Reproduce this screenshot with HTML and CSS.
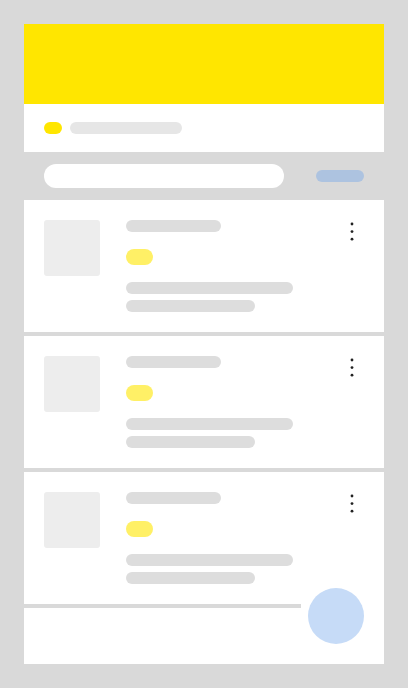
FILE: index.html
```html
<!DOCTYPE html>
<html lang="en">
<head>
<meta charset="utf-8">
<title>List</title>
<link rel="stylesheet" href="styles.css">
</head>
<body>
<div class="app">
  <header class="hero"></header>
  <div class="subbar">
    <span class="dot-pill"></span>
    <span class="sub-pill"></span>
  </div>
  <div class="searchbar">
    <div class="search"></div>
    <div class="action"></div>
  </div>
  <div class="list">
    <div class="card">
      <div class="thumb"></div>
      <div class="body">
        <div class="title"></div>
        <div class="tag"></div>
        <div class="line line-long"></div>
        <div class="line line-short"></div>
      </div>
      <svg class="kebab" viewBox="0 0 24 24" width="24" height="24"><circle cx="12" cy="4" r="1.4"/><circle cx="12" cy="11.6" r="1.4"/><circle cx="12" cy="19.2" r="1.4"/></svg>
    </div>
    <div class="card">
      <div class="thumb"></div>
      <div class="body">
        <div class="title"></div>
        <div class="tag"></div>
        <div class="line line-long"></div>
        <div class="line line-short"></div>
      </div>
      <svg class="kebab" viewBox="0 0 24 24" width="24" height="24"><circle cx="12" cy="4" r="1.4"/><circle cx="12" cy="11.6" r="1.4"/><circle cx="12" cy="19.2" r="1.4"/></svg>
    </div>
    <div class="card">
      <div class="thumb"></div>
      <div class="body">
        <div class="title"></div>
        <div class="tag"></div>
        <div class="line line-long"></div>
        <div class="line line-short"></div>
      </div>
      <svg class="kebab" viewBox="0 0 24 24" width="24" height="24"><circle cx="12" cy="4" r="1.4"/><circle cx="12" cy="11.6" r="1.4"/><circle cx="12" cy="19.2" r="1.4"/></svg>
    </div>
  </div>
  <div class="footer">
    <div class="strip"></div>
  </div>
  <div class="fab"></div>
</div>
</body>
</html>
```
FILE: styles.css
```css
html, body {
  margin: 0;
  padding: 0;
}
body {
  background: #d9d9d9;
  padding: 24px;
  font-family: "Liberation Sans", Arial, sans-serif;
}
.app {
  position: relative;
  width: 360px;
  height: 640px;
  display: flex;
  flex-direction: column;
}
.hero {
  height: 80px;
  background: #ffe600;
  flex: none;
}
.subbar {
  height: 48px;
  background: #ffffff;
  display: flex;
  align-items: center;
  padding: 0 20px;
  gap: 8px;
  flex: none;
}
.dot-pill {
  width: 18px;
  height: 12px;
  border-radius: 6px;
  background: #ffe600;
}
.sub-pill {
  width: 112px;
  height: 12px;
  border-radius: 6px;
  background: #e6e6e6;
}
.searchbar {
  height: 48px;
  display: flex;
  align-items: center;
  justify-content: space-between;
  padding: 0 20px;
  flex: none;
}
.search {
  width: 240px;
  height: 24px;
  border-radius: 12px;
  background: #ffffff;
}
.action {
  width: 48px;
  height: 12px;
  border-radius: 6px;
  background: #adc3e0;
}
.list {
  display: flex;
  flex-direction: column;
  gap: 4px;
  flex: none;
}
.card {
  height: 132px;
  box-sizing: border-box;
  background: #ffffff;
  padding: 20px;
  display: flex;
  align-items: flex-start;
}
.thumb {
  width: 56px;
  height: 56px;
  border-radius: 3px;
  background: #ededed;
  flex: none;
}
.body {
  margin-left: 26px;
  flex: 1;
  display: flex;
  flex-direction: column;
  align-items: flex-start;
}
.title {
  width: 95px;
  height: 12px;
  border-radius: 6px;
  background: #dddddd;
}
.tag {
  margin-top: 17px;
  width: 27px;
  height: 16px;
  border-radius: 8px;
  background: #fff066;
}
.line {
  height: 12px;
  border-radius: 6px;
  background: #dddddd;
}
.line-long {
  margin-top: 17px;
  width: 167px;
}
.line-short {
  margin-top: 6px;
  width: 129px;
}
.kebab {
  flex: none;
  fill: #222222;
}
.footer {
  flex: 1;
  background: #ffffff;
}
.strip {
  width: 277px;
  height: 4px;
  background: #d9d9d9;
}
.fab {
  position: absolute;
  right: 20px;
  bottom: 20px;
  width: 56px;
  height: 56px;
  border-radius: 50%;
  background: #c6dbf7;
}
```
